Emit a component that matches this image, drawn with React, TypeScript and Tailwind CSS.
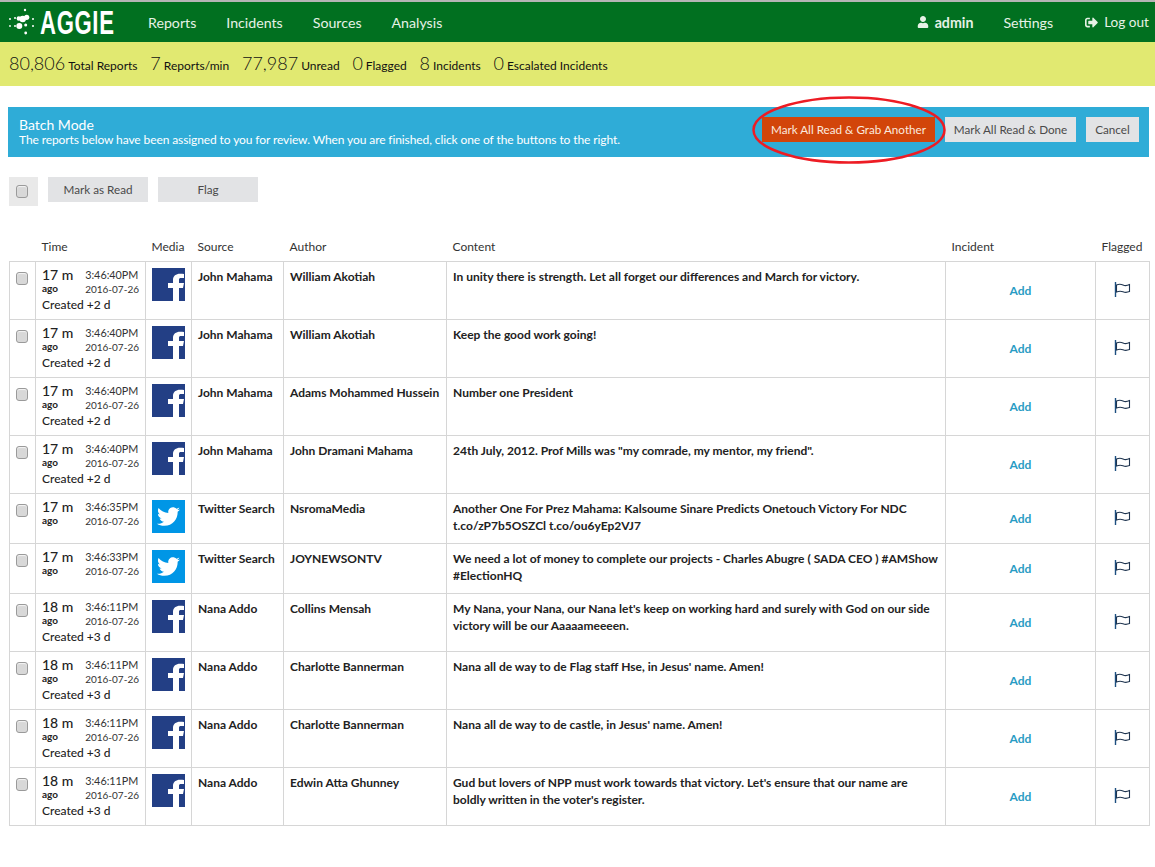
import React from "react";
import { FaTwitter, FaUser, FaSignOutAlt } from "react-icons/fa";

type Row = { ago: string; time: string; created?: string; media: "f" | "t"; source: string; author: string; content: React.ReactNode; h: string };

const rows: Row[] = [
  { ago: "17 m", time: "3:46:40PM", created: "Created +2 d", media: "f", source: "John Mahama", author: "William Akotiah", content: "In unity there is strength. Let all forget our differences and March for victory.", h: "h-[58px]" },
  { ago: "17 m", time: "3:46:40PM", created: "Created +2 d", media: "f", source: "John Mahama", author: "William Akotiah", content: "Keep the good work going!", h: "h-[58px]" },
  { ago: "17 m", time: "3:46:40PM", created: "Created +2 d", media: "f", source: "John Mahama", author: "Adams Mohammed Hussein", content: "Number one President", h: "h-[58px]" },
  { ago: "17 m", time: "3:46:40PM", created: "Created +2 d", media: "f", source: "John Mahama", author: "John Dramani Mahama", content: "24th July, 2012. Prof Mills was \"my comrade, my mentor, my friend\".", h: "h-[58px]" },
  { ago: "17 m", time: "3:46:35PM", media: "t", source: "Twitter Search", author: "NsromaMedia", content: "Another One For Prez Mahama: Kalsoume Sinare Predicts Onetouch Victory For NDC t.co/zP7b5OSZCl t.co/ou6yEp2VJ7", h: "h-[50px]" },
  { ago: "17 m", time: "3:46:33PM", media: "t", source: "Twitter Search", author: "JOYNEWSONTV", content: "We need a lot of money to complete our projects - Charles Abugre ( SADA CEO ) #AMShow #ElectionHQ", h: "h-[50px]" },
  { ago: "18 m", time: "3:46:11PM", created: "Created +3 d", media: "f", source: "Nana Addo", author: "Collins Mensah", content: "My Nana, your Nana, our Nana let's keep on working hard and surely with God on our side victory will be our Aaaaameeeen.", h: "h-[58px]" },
  { ago: "18 m", time: "3:46:11PM", created: "Created +3 d", media: "f", source: "Nana Addo", author: "Charlotte Bannerman", content: "Nana all de way to de Flag staff Hse, in Jesus' name. Amen!", h: "h-[58px]" },
  { ago: "18 m", time: "3:46:11PM", created: "Created +3 d", media: "f", source: "Nana Addo", author: "Charlotte Bannerman", content: "Nana all de way to de castle, in Jesus' name. Amen!", h: "h-[58px]" },
  { ago: "18 m", time: "3:46:11PM", created: "Created +3 d", media: "f", source: "Nana Addo", author: "Edwin Atta Ghunney", content: "Gud but lovers of NPP must work towards that victory. Let's ensure that our name are boldly written in the voter's register.", h: "h-[58px]" },
];

const stats: [string, string][] = [
  ["80,806", "Total Reports"],
  ["7", "Reports/min"],
  ["77,987", "Unread"],
  ["0", "Flagged"],
  ["8", "Incidents"],
  ["0", "Escalated Incidents"],
];

function Check() {
  return <span className="block w-[12px] h-[13px] rounded-[3px] border border-[#9a9a9a] bg-[#d8d8d8] shadow-[inset_0_1px_1px_rgba(255,255,255,0.7)]" />;
}

function Flag() {
  return (
    <svg width="17" height="15" viewBox="0 0 17 15" fill="none" className="block">
      <path d="M1.5 0V15" stroke="#1c4f80" strokeWidth="1.4" />
      <path d="M2.5 3C5 1.8 7 2 9 3C11 4 13 3.8 15.5 2.6V9.6C13 10.6 11 10.6 9 9.8C7 9 5 9 2.5 10Z" stroke="#1f3550" strokeWidth="1.1" />
    </svg>
  );
}

function Fb() {
  return (
    <div className="w-[33px] h-[33px] bg-[#233f85] overflow-hidden">
      <svg viewBox="0 0 33 33" width="33" height="33" className="block">
        <path d="M27 33V20H31L32 15H27V12C27 10.5 27.5 10 29 10H32V6C31 6 29.5 5.8 28 5.8C24 5.8 21 8 21 12V15H16V20H21V33Z" fill="#fff" />
      </svg>
    </div>
  );
}

function Tw() {
  return (
    <div className="w-[33px] h-[33px] bg-[#0096e6] flex items-center justify-center">
      <FaTwitter className="text-white w-[23px] h-[23px]" />
    </div>
  );
}

function Logo() {
  const dots = [
    [25, 12, 1.2], [22.7, 21, 3.2], [26.7, 19.3, 2.6], [18.8, 20.5, 2.2], [19.3, 28, 3], [25.7, 27, 1.5],
    [25.7, 35, 1.4], [15, 20, 1], [10, 21, 1], [15, 28, 1], [10, 28, 0.9], [33, 21, 1], [33, 28, 1],
  ];
  return (
    <svg width="36" height="30" viewBox="8 9 36 30" className="block shrink-0">
      {dots.map(([cx, cy, r], i) => (
        <circle key={i} cx={cx} cy={cy} r={r} fill="#fff" />
      ))}
    </svg>
  );
}

const btn = "h-[25px] bg-[#e2e3e5] text-[11.7px] text-[#4a4a4a] flex items-center justify-center";
const th = "text-left font-normal text-[12px] text-[#333] align-bottom pb-[5px] pl-[6px]";
const td = "border border-[#d6d6d6] align-top";

export default function App() {
  return (
    <div className="relative w-[1155px] h-[867px] bg-white overflow-hidden font-['Lato','Open_Sans',sans-serif] text-[#222]">
      <div className="h-[2px] bg-[#b5b5b5]" />
      <nav className="h-[40px] bg-[#017020] flex items-center text-white text-[14.2px]">
        <div className="flex items-center w-[148px] pl-[8px] shrink-0">
          <Logo />
          <span className="font-['Liberation_Sans',sans-serif] font-bold text-[33px] leading-none tracking-[1px] scale-x-[0.67] origin-left -ml-[4px] block">AGGIE</span>
        </div>
        <div className="flex gap-[30px] pt-[1px] text-[#e6f2e6]">
          <span>Reports</span>
          <span>Incidents</span>
          <span>Sources</span>
          <span>Analysis</span>
        </div>
        <div className="ml-auto flex items-center pr-[6px] pt-[1px] text-[#e6f2e6]">
          <FaUser className="w-[12px] h-[12px] mr-[6px]" />
          <span className="font-bold mr-[30px]">admin</span>
          <span className="mr-[32px]">Settings</span>
          <FaSignOutAlt className="w-[13px] h-[13px] mr-[6px]" />
          <span className="text-[13.6px]">Log out</span>
        </div>
      </nav>
      <div className="h-[44px] bg-[#e1e971] flex items-center pl-[9px] pb-[2px] text-[#111]">
        {stats.map(([n, l]) => (
          <div key={l} className="flex items-baseline mr-[12.8px]">
            <span className="text-[18px] font-light mr-[3px]">{n}</span>
            <span className="text-[12px]">{l}</span>
          </div>
        ))}
      </div>

      <div className="mt-[21px] mx-[8px] mr-[6px] h-[50px] bg-[#2facd7] flex items-center justify-between pl-[11px] pr-[10px] text-white">
        <div>
          <div className="text-[14px] leading-[16px]">Batch Mode</div>
          <div className="text-[12px] leading-[14px] tracking-[-0.1px]">The reports below have been assigned to you for review. When you are finished, click one of the buttons to the right.</div>
        </div>
        <div className="flex mb-[5px]">
          <div className={`${btn} w-[173px] !bg-[#d2450a] !text-[#fbe9df]`}>Mark All Read &amp; Grab Another</div>
          <div className={`${btn} w-[131px] ml-[10px]`}>Mark All Read &amp; Done</div>
          <div className={`${btn} w-[53px] ml-[10px]`}>Cancel</div>
        </div>
      </div>

      <div className="mt-[20px] ml-[9px] flex items-start">
        <div className="w-[29px] h-[29px] bg-[#e9e9e9] flex items-center justify-center pr-[3px]"><Check /></div>
        <div className={`${btn} w-[100px] ml-[10px]`}>Mark as Read</div>
        <div className={`${btn} w-[100px] ml-[10px]`}>Flag</div>
      </div>

      <table className="mt-[26px] ml-[9px] w-[1140px] table-fixed border-collapse">
        <colgroup>
          <col className="w-[26px]" />
          <col className="w-[110px]" />
          <col className="w-[46px]" />
          <col className="w-[92px]" />
          <col className="w-[163px]" />
          <col className="w-[499px]" />
          <col className="w-[150px]" />
          <col className="w-[54px]" />
        </colgroup>
        <thead>
          <tr className="h-[29px]">
            <th />
            <th className={th}>Time</th>
            <th className={th}>Media</th>
            <th className={th}>Source</th>
            <th className={th}>Author</th>
            <th className={th}>Content</th>
            <th className={th}>Incident</th>
            <th className={th}>Flagged</th>
          </tr>
        </thead>
        <tbody>
          {rows.map((r, i) => (
            <tr key={i} className={r.h}>
              <td className={`${td} pl-[6px] pt-[10px]`}><Check /></td>
              <td className={`${td} pl-[6px] pt-[4px]`}>
                <div className="flex justify-between pr-[6px]">
                  <div>
                    <div className="text-[14px] font-medium leading-[17px]">{r.ago}</div>
                    <div className="text-[10px] font-bold leading-[10px]">ago</div>
                  </div>
                  <div className="text-[10px] leading-[14px] text-[#333] pt-[2px]">
                    <div className="text-[10.8px]">{r.time}</div>
                    <div>2016-07-26</div>
                  </div>
                </div>
                {r.created && <div className="text-[12px] font-medium leading-[15px] mt-[1px]">{r.created}</div>}
              </td>
              <td className={`${td} pl-[6px] pt-[6px]`}>{r.media === "f" ? <Fb /> : <Tw />}</td>
              <td className={`${td} pl-[6px] pt-[6px] text-[12px] font-bold leading-[17px]`}>{r.source}</td>
              <td className={`${td} pl-[6px] pt-[6px] text-[12px] font-bold leading-[17px]`}>{r.author}</td>
              <td className={`${td} pl-[6px] pr-[6px] pt-[6px] text-[12px] font-bold leading-[17px]`}>{r.content}</td>
              <td className={`${td} !align-middle text-center text-[12px] font-bold text-[#2a9cc4] pt-[2px]`}>Add</td>
              <td className={`${td} !align-middle`}><div className="flex justify-center pb-[1px]"><Flag /></div></td>
            </tr>
          ))}
        </tbody>
      </table>

      <svg width="200" height="72" viewBox="0 0 200 72" fill="none" className="absolute left-[750px] top-[95px]">
        <ellipse cx="99" cy="35" rx="95.5" ry="32.5" stroke="#ed1c24" strokeWidth="2.5" />
      </svg>
    </div>
  );
}
